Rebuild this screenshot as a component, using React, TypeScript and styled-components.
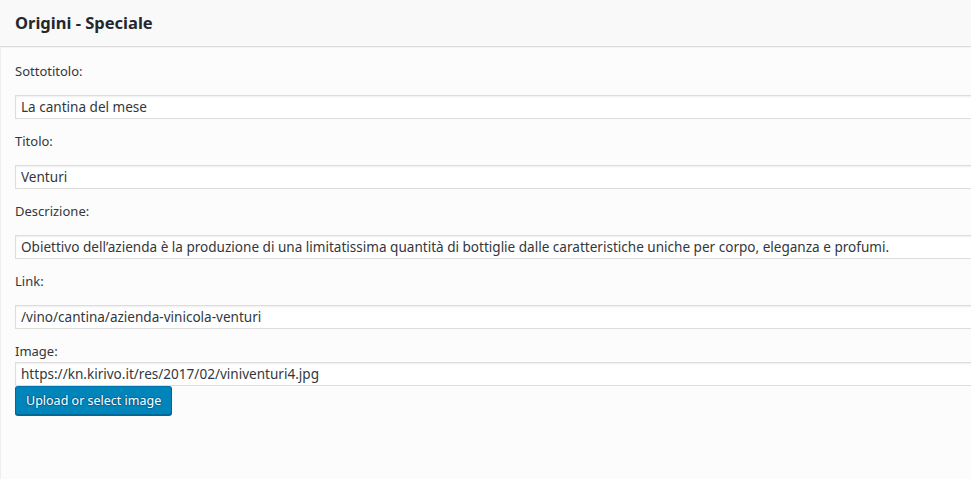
import React from "react";
import styled, { createGlobalStyle } from "styled-components";

const Global = createGlobalStyle`
  html, body { margin: 0; padding: 0; overflow: hidden; background: #fdfdfd; }
  body { font-family: "Noto Sans", "Open Sans", sans-serif; color: #32373c; }
  #root { min-height: 479px; }
`;

const Panel = styled.div`
  width: 1000px;
  min-height: 479px;
  display: flex;
  flex-direction: column;
  background: #fcfcfc;
`;

const Header = styled.div`
  height: 47px;
  box-sizing: border-box;
  padding: 0 15px 1px;
  display: flex;
  align-items: center;
  background: #f9f9f9;
  border-bottom: 1px solid #dcdcdc;
  box-shadow: 0 1px 1px rgba(0, 0, 0, 0.03);
`;

const Title = styled.h3`
  margin: 0;
  font-size: 16.5px;
  font-weight: 700;
  color: #23282d;
  line-height: 20px;
`;

const Body = styled.div`
  flex: 1;
  padding: 15px 15px 15px 14px;
  border-left: 1px solid #eeeeee;
  display: flex;
  flex-direction: column;
`;

const Field = styled.div<{ $tight?: boolean }>`
  display: flex;
  flex-direction: column;
  margin-bottom: ${(p) => (p.$tight ? "0" : "13px")};
`;

const Label = styled.label<{ $tight?: boolean }>`
  display: block;
  font-size: 13px;
  line-height: 18px;
  margin-bottom: ${(p) => (p.$tight ? "2px" : "15px")};
  color: #32373c;
`;

const Input = styled.input`
  box-sizing: border-box;
  width: 100%;
  height: 24px;
  margin: 0;
  padding: 0 5px;
  border: 1px solid #dddddd;
  box-shadow: inset 0 1px 2px rgba(0, 0, 0, 0.07);
  background: #ffffff;
  color: #32373c;
  font-family: inherit;
  font-size: 13.55px;
  outline: none;
`;

const Button = styled.button`
  align-self: flex-start;
  box-sizing: border-box;
  height: 29px;
  margin: 0;
  padding: 0 10px;
  background: #0085ba;
  border: 1px solid;
  border-color: #0073aa #006799 #006799;
  border-radius: 3px;
  box-shadow: 0 1px 0 #006799;
  color: #ffffff;
  font-family: inherit;
  font-size: 12.5px;
  line-height: 26px;
  text-shadow: 0 -1px 1px #006799, 1px 0 1px #006799, 0 1px 1px #006799, -1px 0 1px #006799;
  cursor: pointer;
`;

const fields = [
  { label: "Sottotitolo:", value: "La cantina del mese" },
  { label: "Titolo:", value: "Venturi" },
  {
    label: "Descrizione:",
    value:
      "Obiettivo dell\u2019azienda \u00e8 la produzione di una limitatissima quantit\u00e0 di bottiglie dalle caratteristiche uniche per corpo, eleganza e profumi.",
  },
  { label: "Link:", value: "/vino/cantina/azienda-vinicola-venturi" },
];

export default function App() {
  return (
    <>
      <Global />
      <Panel>
        <Header>
          <Title>Origini - Speciale</Title>
        </Header>
        <Body>
          {fields.map((f) => (
            <Field key={f.label}>
              <Label>{f.label}</Label>
              <Input readOnly value={f.value} />
            </Field>
          ))}
          <Field $tight>
            <Label $tight>Image:</Label>
            <Input readOnly value="https://kn.kirivo.it/res/2017/02/viniventuri4.jpg" />
            <Button type="button">Upload or select image</Button>
          </Field>
        </Body>
      </Panel>
    </>
  );
}
